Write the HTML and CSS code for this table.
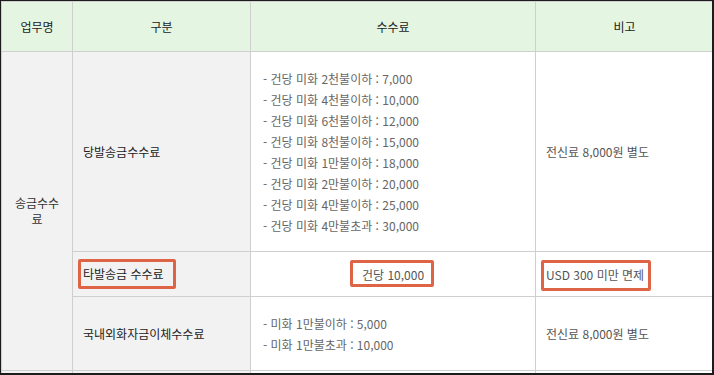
FILE: index.html
```html
<!DOCTYPE html>
<html lang="ko">
<head>
<meta charset="utf-8">
<link rel="stylesheet" href="styles.css">
</head>
<body>
<div class="frame">
  <table class="fee">
    <thead>
      <tr>
        <th class="c1">업무명</th>
        <th class="c2">구분</th>
        <th class="c3">수수료</th>
        <th class="c4">비고</th>
      </tr>
    </thead>
    <tbody>
      <tr class="r1">
        <td class="task" rowspan="3">송금수수료</td>
        <td class="kind">당발송금수수료</td>
        <td class="fees">
          <ul class="list">
            <li>- 건당 미화 2천불이하 : 7,000</li>
            <li>- 건당 미화 4천불이하 : 10,000</li>
            <li>- 건당 미화 6천불이하 : 12,000</li>
            <li>- 건당 미화 8천불이하 : 15,000</li>
            <li>- 건당 미화 1만불이하 : 18,000</li>
            <li>- 건당 미화 2만불이하 : 20,000</li>
            <li>- 건당 미화 4만불이하 : 25,000</li>
            <li>- 건당 미화 4만불초과 : 30,000</li>
          </ul>
        </td>
        <td class="note">전신료 8,000원 별도</td>
      </tr>
      <tr class="r2">
        <td class="kind"><span class="mark m1">타발송금 수수료</span></td>
        <td class="fees center"><span class="mark m2">건당 10,000</span></td>
        <td class="note"><span class="mark m3">USD 300 미만 면제</span></td>
      </tr>
      <tr class="r3">
        <td class="kind">국내외화자금이체수수료</td>
        <td class="fees">
          <ul class="list">
            <li>- 미화 1만불이하 : 5,000</li>
            <li>- 미화 1만불초과 : 10,000</li>
          </ul>
        </td>
        <td class="note">전신료 8,000원 별도</td>
      </tr>
      <tr class="r4">
        <td class="task"></td>
        <td class="kind"></td>
        <td class="fees"></td>
        <td class="note"></td>
      </tr>
    </tbody>
  </table>
</div>
</body>
</html>
```

FILE: styles.css
```css
html, body {
  margin: 0;
  padding: 0;
  background: #ffffff;
}

body {
  font-family: "Noto Sans CJK KR", "Liberation Sans", sans-serif;
  font-size: 12px;
  color: #333;
}

.frame {
  width: 714px;
  height: 375px;
  box-sizing: border-box;
  border-left: 1px solid #1c1c1c;
  border-top: 1px solid #1c1c1c;
  border-right: 2px solid #1c1c1c;
  border-bottom: 2px solid #1c1c1c;
  overflow: hidden;
}

.fee {
  border-collapse: separate;
  border-spacing: 0;
  table-layout: fixed;
  width: 712px;
  border-left: 1px solid #cfcfcf;
  border-top: 1px solid #cfcfcf;
}

.fee th,
.fee td {
  box-sizing: border-box;
  border-right: 1px solid #cfcfcf;
  border-bottom: 1px solid #cfcfcf;
  padding: 0;
  vertical-align: middle;
  font-weight: normal;
}

.fee th {
  height: 50px;
  background: #e4f5e2;
  color: #222;
  text-align: center;
  line-height: 16px;
}

.c1 { width: 71px; }
.c2 { width: 178px; }
.c3 { width: 285px; }
.c4 { width: 178px; }

.r1 td { height: 200px; }
.r2 td { height: 45px; }
.r3 td { height: 74px; }
.r4 td { height: 30px; }

.task {
  background: #f2f2f2;
  color: #333;
  text-align: center;
  line-height: 16px;
  padding: 0 10px !important;
}

.kind {
  background: #f2f2f2;
  color: #222;
  padding-left: 10px !important;
  line-height: 16px;
}

.fees {
  background: #ffffff;
  color: #666;
  padding-left: 12px !important;
}

.fees.center {
  text-align: center;
  padding-left: 0 !important;
  color: #555;
}

.note {
  background: #ffffff;
  color: #555;
  padding-left: 10px !important;
}

.list {
  list-style: none;
  margin: 0;
  padding: 0;
}

.list li {
  line-height: 21px;
}

.mark {
  position: relative;
  display: inline-block;
  line-height: 16px;
}

.mark::after {
  content: "";
  position: absolute;
  border: 3px solid #de6446;
  border-radius: 2px;
}

.m1::after { left: -5px; right: -12px; top: -7px; bottom: -7px; }
.m2::after { left: -12px; right: -10px; top: -7px; bottom: -4px; }
.m3::after { left: -5px; right: -7px; top: -7px; bottom: -8px; }
```
